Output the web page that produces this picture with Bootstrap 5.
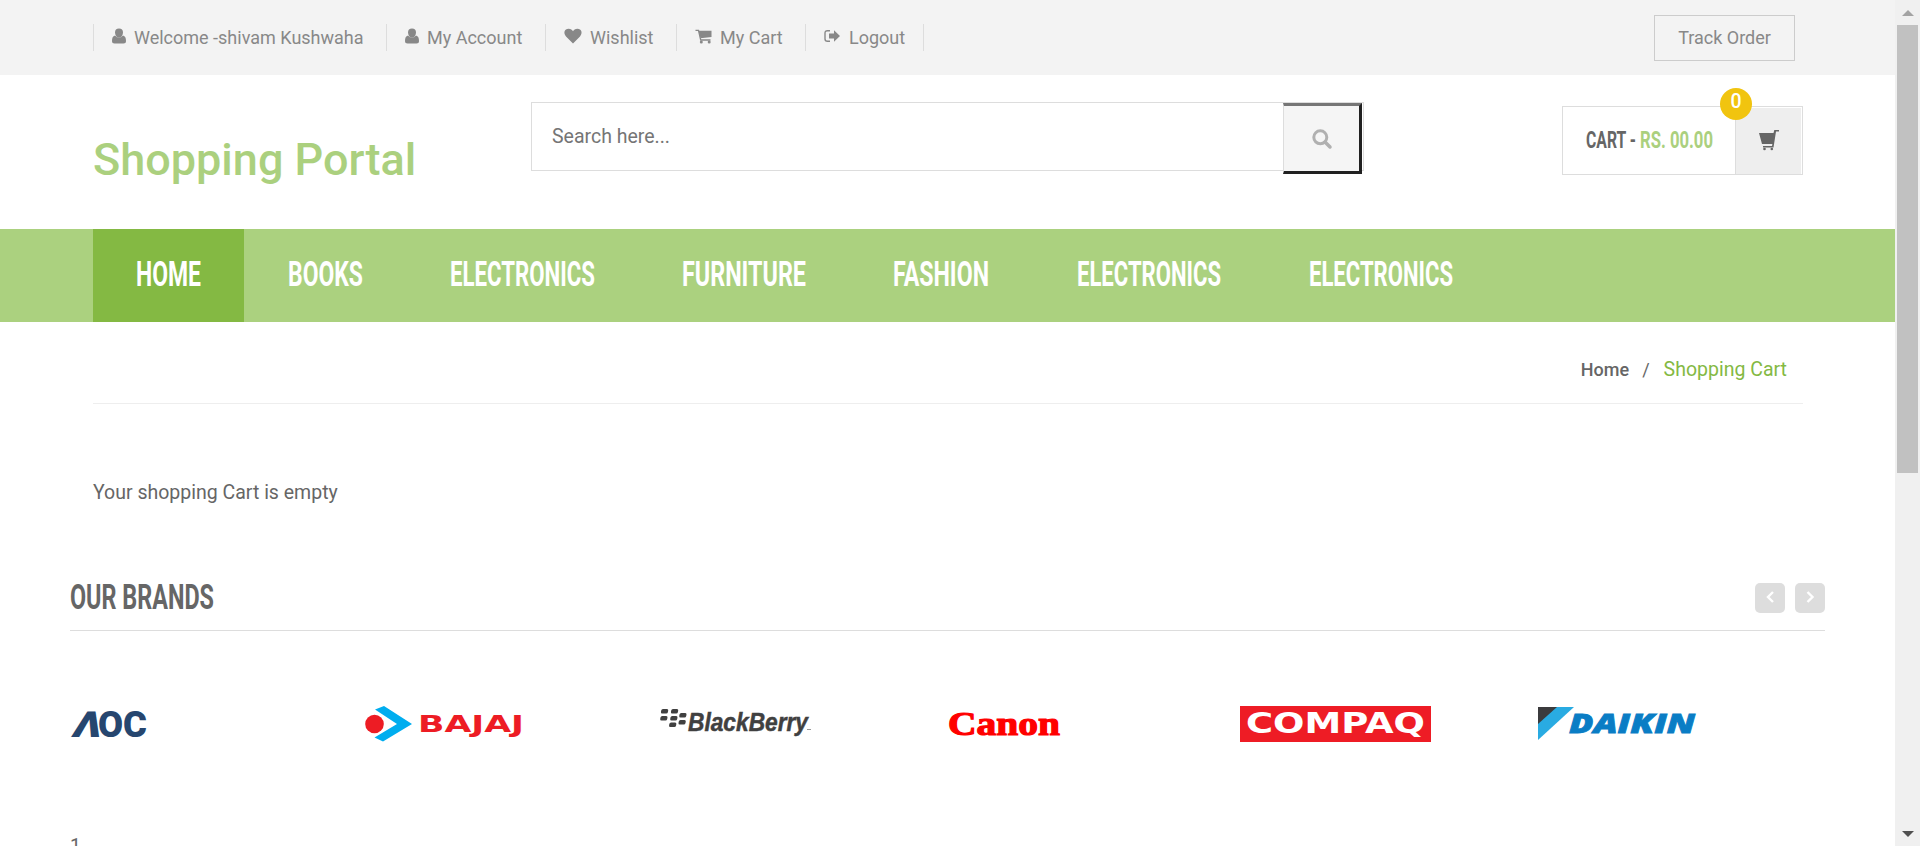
<!DOCTYPE html>
<html lang="en">
<head>
<meta charset="utf-8">
<title>Shopping Portal | My Cart</title>
<link href="https://cdn.jsdelivr.net/npm/bootstrap@5.3.0/dist/css/bootstrap.min.css" rel="stylesheet">
<style>
body{font-family:Roboto,"Liberation Sans",sans-serif;font-size:19.5px;color:#666;height:846px;overflow:hidden;line-height:28px}
a{color:inherit;text-decoration:none}
svg{display:block;overflow:visible;flex:none}
.page-body{width:1895px;height:846px;overflow:hidden}
.shell{margin-left:93px;width:1710px}
.top-bar{background:#f3f3f3;height:75px;color:#888;font-size:18px}
.top-links li{height:27px;border-left:1px solid #ddd;padding-left:18px;white-space:nowrap;line-height:27px}
.top-links li svg{margin-top:4px}
.top-links li:nth-child(1){width:293px}
.top-links li:nth-child(2){width:159px}
.top-links li:nth-child(3){width:131px}
.top-links li:nth-child(4){width:129px}
.top-links li:nth-child(5){width:119px;border-right:1px solid #ddd}
.track{border:1px solid #ccc;width:141px;height:46px;margin-right:8px;line-height:44px}
.main-head{height:154px}
.brand-name{font-size:45px;font-weight:500;color:#abd07e;width:438px;line-height:54px;margin-top:58px;white-space:nowrap}
.search-box{width:833px;height:69px;border:1px solid #ddd;margin-top:27px}
.search-box input{border:0;outline:0;padding:0 0 0 20px;color:#666;font-size:19.5px;background:transparent;min-width:0}
.search-box input::placeholder{color:#757575;opacity:1}
.search-box button{width:79px;height:71px;background:#f5f5f5;border-style:solid;border-width:3px 3px 3px 1px;border-color:#767676 #212121 #212121 #ddd;margin-right:1px;padding:0}
.cart-box{width:241px;height:69px;border:1px solid #ddd;margin-top:31px;margin-left:198px}
.cart-side{width:66px;height:66px;margin:1px 1px 0 0;background:#eee;border-left:1px solid #ddd}
.count{width:32px;height:32px;border-radius:50%;background:#f1c40f;color:#fff;left:157px;top:-19px;font-size:19.5px;line-height:28px;font-weight:500}
.squeeze{font-family:Roboto,sans-serif;font-weight:700}
.main-nav{background:#abd17f;height:93px}
.main-nav a{padding:0 44px;height:93px}
.main-nav a.active{background:#84b943}
.crumbs{height:82px;border-bottom:1px solid #eee;padding-right:16px;padding-top:14px}
.crumbs .home-link{font-size:18px;font-weight:500}
.crumbs .slash{padding:0 14px 0 13px;font-size:18px}
.crumbs .here{color:#84b943}
.note-line{margin-top:75px}
.brands{margin-left:70px;width:1755px;margin-top:68px}
.brands-head{height:56px;border-bottom:1px solid #ddd}
.pager{gap:10px}
.pager-btn{width:30px;height:30px;border-radius:5px;background:#ddd;margin-top:8px}
.logo-row{height:36px;margin-top:75px}
.foot-num{margin-top:91px}
.scroll-rail{width:25px;height:846px;background:#f0f0f0;padding:9px 0 8px}
.thumb{width:21px;height:448px;background:#c1c1c1;margin-top:9px}
</style>
</head>
<body>
<div class="d-flex">
<div class="page-body">
  <div class="top-bar">
    <div class="shell d-flex justify-content-between align-items-center h-100">
      <ul class="top-links list-unstyled d-flex m-0">
        <li class="d-flex"><svg width="22" height="16"><path d="M7 .5a4 4 0 0 1 4 4c0 3-2 5-4 5s-4-2-4-5a4 4 0 0 1 4-4ZM3 7.500Q7 12 11 7.500C13.200 8 14 10 14 13q0 2.500-2.500 2.500H2.500Q0 15.500 0 13c0-3 .8-5 3-5.500Z" fill="#888"/></svg><a href="#">Welcome -shivam Kushwaha</a></li>
        <li class="d-flex"><svg width="22" height="16"><path d="M7 .5a4 4 0 0 1 4 4c0 3-2 5-4 5s-4-2-4-5a4 4 0 0 1 4-4ZM3 7.500Q7 12 11 7.500C13.200 8 14 10 14 13q0 2.500-2.500 2.500H2.500Q0 15.500 0 13c0-3 .8-5 3-5.500Z" fill="#888"/></svg><a href="#">My Account</a></li>
        <li class="d-flex"><svg width="26" height="16"><path d="M9 15.500 2 8.500C-1 5 .5 .8 4.500 .8 7 .8 8 2 9 3.200 10 2 11 .8 13.500 .8 17.500 .8 19 5 16 8.500Z" fill="#888"/></svg><a href="#">Wishlist</a></li>
        <li class="d-flex"><svg width="25" height="16"><path d="M3.500 2.800H16.500V9L5.500 10.300Z" fill="#888"/><path d="M.5 2.300H3.500L5.700 12H15.500" fill="none" stroke="#888" stroke-width="1.300"/><circle cx="6.300" cy="14" r="1.500" fill="#888"/><circle cx="14.200" cy="14" r="1.500" fill="#888"/></svg><a href="#">My Cart</a></li>
        <li class="d-flex"><svg width="25" height="16"><path d="M6 2.700H3.500Q1 2.700 1 5V11q0 2.300 2.500 2.300H6" fill="none" stroke="#888" stroke-width="1.400"/><path d="M5 5.500h5V2.200l6 5.800-6 5.800v-3.300H5Z" fill="#888"/></svg><a href="#">Logout</a></li>
      </ul>
      <a href="#" class="track text-center">Track Order</a>
    </div>
  </div>

  <header class="main-head shell d-flex align-items-start">
    <a href="#" class="brand-name">Shopping Portal</a>
    <form class="search-box d-flex align-items-start">
      <input class="flex-grow-1 h-100" type="text" placeholder="Search here...">
      <button type="button" class="d-flex align-items-center justify-content-center"><svg width="20" height="20"><circle cx="8.300" cy="8.300" r="6.500" fill="none" stroke="#b0b0b0" stroke-width="3"/><path d="m13 13 5 5" stroke="#b0b0b0" stroke-width="3.500" stroke-linecap="round"/></svg></button>
    </form>
    <div class="cart-box d-flex justify-content-between position-relative">
      <svg class="squeeze" width="160" height="67" font-size="24"><text x="23" y="41" textLength="50" lengthAdjust="spacingAndGlyphs" fill="#666">CART -</text><text x="77" y="41" textLength="73" lengthAdjust="spacingAndGlyphs" fill="#abd07e">RS. 00.00</text></svg>
      <div class="cart-side d-flex align-items-center justify-content-center"><svg width="20" height="22"><path d="M0 3h14.500l.8-3H20v1.500h-3L14.500 17.500H4v-1.500H13l.4-2H3Z" fill="#666"/><circle cx="5.500" cy="19" r="1.300" fill="#666"/><circle cx="12.800" cy="19" r="1.300" fill="#666"/></svg></div>
      <span class="count position-absolute text-center">0</span>
    </div>
  </header>

  <nav class="main-nav">
    <div class="shell d-flex squeeze">
      <a href="#" class="active"><svg width="63" height="93" font-size="35" fill="#fff"><text x="-1" y="57" textLength="65" lengthAdjust="spacingAndGlyphs">HOME</text></svg></a>
      <a href="#"><svg width="74" height="93" font-size="35" fill="#fff"><text y="57" textLength="75" lengthAdjust="spacingAndGlyphs">BOOKS</text></svg></a>
      <a href="#"><svg width="145" height="93" font-size="35" fill="#fff"><text y="57" textLength="145" lengthAdjust="spacingAndGlyphs">ELECTRONICS</text></svg></a>
      <a href="#"><svg width="123" height="93" font-size="35" fill="#fff"><text x="-1" y="57" textLength="124" lengthAdjust="spacingAndGlyphs">FURNITURE</text></svg></a>
      <a href="#"><svg width="95" height="93" font-size="35" fill="#fff"><text x="-1" y="57" textLength="96" lengthAdjust="spacingAndGlyphs">FASHION</text></svg></a>
      <a href="#"><svg width="144" height="93" font-size="35" fill="#fff"><text y="57" textLength="144" lengthAdjust="spacingAndGlyphs">ELECTRONICS</text></svg></a>
      <a href="#"><svg width="144" height="93" font-size="35" fill="#fff"><text y="57" textLength="144" lengthAdjust="spacingAndGlyphs">ELECTRONICS</text></svg></a>
    </div>
  </nav>

  <main>
    <div class="shell">
      <div class="crumbs d-flex justify-content-end align-items-center"><a href="#" class="home-link">Home</a><span class="slash">/</span><span class="here">Shopping Cart</span></div>
      <p class="note-line mb-0">Your shopping Cart is empty</p>
    </div>
    <section class="brands">
      <div class="brands-head d-flex justify-content-between">
        <svg class="squeeze" width="144" height="50" font-size="35"><text y="34" textLength="144" lengthAdjust="spacingAndGlyphs" fill="#666">OUR BRANDS</text></svg>
        <div class="d-flex pager">
          <a href="#" class="pager-btn"><svg width="30" height="30"><path d="m18 9-5 5 5 5" fill="none" stroke="#fff" stroke-width="2.400"/></svg></a>
          <a href="#" class="pager-btn"><svg width="30" height="30"><path d="m12.500 9 5 5-5 5" fill="none" stroke="#fff" stroke-width="2.400"/></svg></a>
        </div>
      </div>
      <div class="logo-row d-flex">
        <svg width="293" height="36" font-family="Roboto" font-weight="900" font-size="36" fill="#26466f"><g transform="translate(0 31) skewX(-14)"><text x="1" y="0" textLength="28" lengthAdjust="spacingAndGlyphs">Λ</text></g><text x="28" y="31" textLength="49" lengthAdjust="spacingAndGlyphs">OC</text></svg>
        <svg width="293" height="36"><circle cx="11.500" cy="18" r="9.300" fill="#ed1c24"/><path d="M12 3.500 21 0l28 18-29 17.500-8.500-4L34 18Z" fill="#00adef"/><text x="55" y="26" font-family="DejaVu Sans" font-weight="700" font-size="22.500" textLength="106" lengthAdjust="spacingAndGlyphs" fill="#ed1c24">BAJAJ</text></svg>
        <svg width="292" height="36"><g fill="#404040"><g transform="skewX(-10)"><rect x="6" y="3" width="7" height="4.500" rx="1.500"/><rect x="16" y="3" width="7" height="4.500" rx="1.500"/><rect x="6.500" y="10" width="7" height="4.500" rx="1.500"/><rect x="16.500" y="10" width="7" height="4.500" rx="1.500"/><rect x="25" y="7" width="7" height="4.500" rx="1.500"/><rect x="16.500" y="16.500" width="7" height="4.500" rx="1.500"/><rect x="25.500" y="14" width="7" height="4.500" rx="1.500"/></g><text x="32" y="25" font-family="Liberation Sans" font-weight="700" font-style="italic" font-size="25" textLength="120" lengthAdjust="spacingAndGlyphs" stroke="#404040" stroke-width=".5">BlackBerry</text><path d="M151 23.500h4" stroke="#999"/></g></svg>
        <svg width="292" height="36"><text x="0" y="28.500" font-family="Liberation Serif" font-weight="700" font-size="34" textLength="112" lengthAdjust="spacingAndGlyphs" fill="#f00" stroke="#f00" stroke-width="1.200">Canon</text></svg>
        <svg width="293" height="36"><rect width="191" height="36" fill="#ee1c25"/><text x="6" y="26.500" font-family="DejaVu Sans" font-weight="700" font-size="29" textLength="179" lengthAdjust="spacingAndGlyphs" fill="#fff">COMPAQ</text></svg>
        <svg width="170" height="36"><path d="M5 1h36L5 34Z" fill="#29abe2"/><path d="M5 1h19L5 18Z" fill="#3b3b3d"/><text x="36" y="27" font-family="Open Sans" font-weight="800" font-style="italic" font-size="27" textLength="126" lengthAdjust="spacingAndGlyphs" fill="#0a7dc5" stroke="#0a7dc5" stroke-width=".8">DAIKIN</text></svg>
      </div>
      <div class="foot-num">1</div>
    </section>
  </main>
</div>
<div class="scroll-rail d-flex flex-column align-items-center">
  <svg width="12" height="7"><path d="M0 7 6 1l6 6Z" fill="#a3a3a3"/></svg>
  <div class="thumb"></div>
  <svg class="mt-auto" width="12" height="7"><path d="M0 0h12L6 6Z" fill="#505050"/></svg>
</div>
</div>
<script src="https://cdn.jsdelivr.net/npm/bootstrap@5.3.0/dist/js/bootstrap.bundle.min.js"></script>
</body>
</html>
